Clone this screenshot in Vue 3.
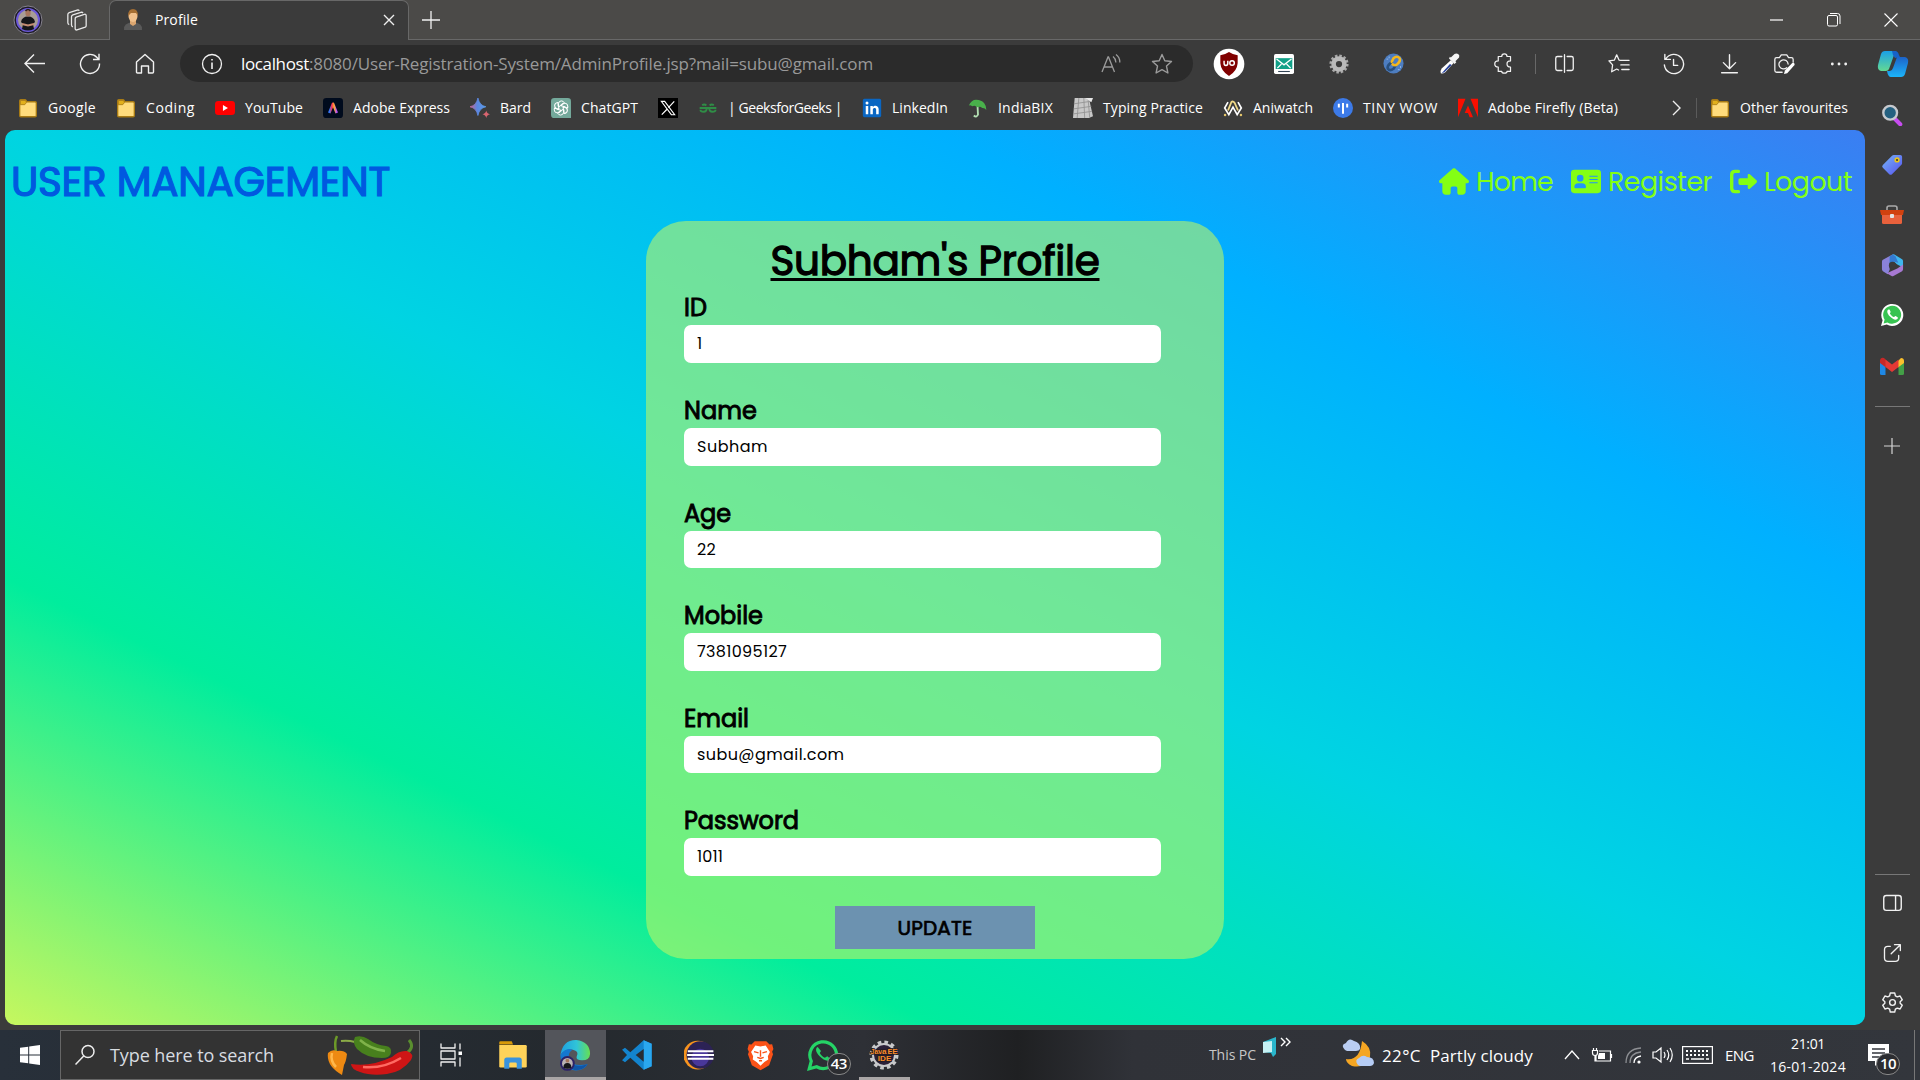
<script setup>
// Spreads a label's letters so that it fills the given width in pixels
const vFit = {
  mounted(el, { value }) {
    if (!value) return
    const natural = el.getBoundingClientRect().width
    const n = [...el.textContent].length
    el.style.letterSpacing = `${(value - natural) / n}px`
  },
}

const folder = '<path d="M2 3.5q0-1.5 1.5-1.5h5q1 0 1.500 1.500l.5 1h10q1.500 0 1.500 1.500v15q0 1.500-1.500 1.500h-17q-1.500 0-1.500-1.500z" fill="#ffdc7c" stroke="#a87b14" stroke-width="1.6"/><path d="M2.800 3h6.500l.8 2.500-2 2.500H2.800z" fill="#e2b01c" stroke="#a87b14"/>'
const whatsapp = '<path d="M1 23l1.600-5.800A11 11 0 1 1 6.800 21.500z" fill="#fff"/><path d="M3.600 20.400l1-3.800A9 9 0 1 1 7.500 19.400z" fill="#37c351"/><path d="M8.500 6.500c-2 1-1.500 4 1.500 7s6.500 4.500 7.800 1.800c.4-1-.2-1.300-2.300-2.300-.8-.3-1 1.300-1.800 1-1.700-.6-3-2-3.800-3.500-.3-.6 1-1 .7-1.800-.8-2-1-2.400-2.100-2.200z" fill="#fff"/>'
const gear = '<path d="M9.700 2h4.600l.7 3 2 1.100 2.900-.9 2.300 4-2.200 2v1.600l2.200 2-2.300 4-2.900-.9-2 1.100-.7 3H9.700L9 19l-2-1.100-2.900.9-2.300-4 2.200-2v-1.600l-2.200-2 2.300-4 2.900.9L9 5z" fill="none" stroke="#f1f1f1" stroke-width="1.500" stroke-linejoin="round"/><circle cx="12" cy="12" r="3" fill="none" stroke="#f1f1f1" stroke-width="1.500"/>'
const line = (d, w = 1.4, c = '#f1f1f1') =>
  `<path d="${d}" fill="none" stroke="${c}" stroke-width="${w}" stroke-linecap="round" stroke-linejoin="round"/>`

const bookmarks = [
  { t: 'Google', w: 48, i: folder },
  { t: 'Coding', w: 49, i: folder },
  { t: 'YouTube', w: 58, i: '<rect x="0" y="3.500" width="24" height="17" rx="4" fill="#f00"/><path d="M9.500 8.500v7l6-3.500z" fill="#fff"/>' },
  { t: 'Adobe Express', w: 97, i: '<rect width="24" height="24" rx="4" fill="#000b1d"/><path d="M7.500 18L12 7l4.500 11" fill="none" stroke="url(#rainbow)" stroke-width="3.200" stroke-linejoin="round"/>' },
  { t: 'Bard', w: 31, i: '<path d="M9.500 0q1.800 9 9.500 10.500-7.700 1.500-9.500 10.500Q7.700 12 0 10.500 7.700 9 9.500 0z" fill="url(#bard)" stroke="url(#bard)"/><path d="M19.500 15q.8 4 4.500 4.500-3.700.5-4.500 4.500-.8-4-4.500-4.500 3.700-.5 4.500-4.500z" fill="#d96570"/>' },
  { t: 'ChatGPT', w: 57, i: '<path d="M4 0h16q4 0 4 4v20H4q-4 0-4-4V4q0-4 4-4z" fill="#74a99b"/><g fill="none" stroke="#fff" stroke-width="1.200" transform="translate(12 12)"><path id="petal" d="M0-3.200L-3-1.500V-5.500Q-2.500-8.500.5-8.500q2.500.2 3.500 2L.5-4.300V0"/><use href="#petal" transform="rotate(60)"/><use href="#petal" transform="rotate(120)"/><use href="#petal" transform="rotate(180)"/><use href="#petal" transform="rotate(240)"/><use href="#petal" transform="rotate(300)"/></g><circle cx="12" cy="12" r="2" fill="#74a99b"/>' },
  { t: '', w: 0, i: '<rect width="24" height="24" fill="#000"/><path d="M4 4h4l12 16h-4z" fill="#000" stroke="#fff" stroke-width="1.300"/><path d="M19.500 4l-7 7.500M10.800 13.500L4.500 20" stroke="#fff" stroke-width="1.400"/>' },
  { t: '| GeeksforGeeks |', w: 114, i: '<g fill="none" stroke="#2f8d46" stroke-width="2.300"><path d="M2 12h20M10.500 12q0 4.500-3.800 4.500T3 14M10 9Q8 7 5 8.500M13.500 12q0 4.500 3.800 4.500T21 14M14 9q2-2 5-.5"/></g>' },
  { t: 'LinkedIn', w: 56, i: '<rect x="1" y="1" width="22" height="22" rx="2" fill="#0a66c2"/><path d="M4.500 9.500h3v10h-3zM10 9.500h3v1.500c2-3 7-2 7 2.500v6h-3v-5.500c0-3-4-2.500-4 0v5.500h-3z" fill="#fff"/><circle cx="6" cy="6" r="1.800" fill="#fff"/>' },
  { t: 'IndiaBIX', w: 55, i: '<path d="M1 9Q5 0 13 2.500q9 2 9 12-2-3-5-2.500-3-3-6 0-2-4-6-2-2-2-4-1z" fill="#49b04b"/><path d="M11.500 11l.5 9q-2 4-5 1" fill="none" stroke="#b3e0b3" stroke-width="2.200"/>' },
  { t: 'Typing Practice', w: 100, i: '<path d="M2 0h17l5 22-5 2H0z" fill="#c8c8c8"/><path d="M1 7l20-3M1 13l21-3M1 19l22-3M7 0L5 24M13 0l1 24M18 0l2 23" stroke="#929292"/><path d="M15 0h9l-2 5z" fill="#e8e8e8"/>' },
  { t: 'Aniwatch', w: 60, i: '<path d="M6 15L10 5q2-2 4 1l4 9" fill="none" stroke="#f0d987" stroke-width="2.200"/><path d="M6 5L2 12l5 8 5-9 5 9 5-8-4-7" fill="none" stroke="#fff" stroke-width="2"/><circle cx="2.500" cy="20.500" r="1.500" fill="#e4c66b"/><circle cx="21.500" cy="20.500" r="1.500" fill="#e4c66b"/>' },
  { t: 'TINY WOW', w: 75, i: '<circle cx="12" cy="12" r="12" fill="#3c7ae8"/><path d="M7 7v4.500M17 7v4.500M12 6v13" fill="none" stroke="#fff" stroke-width="2.400"/>' },
  { t: 'Adobe Firefly (Beta)', w: 130, i: '<path d="M0 1h9L0 23zM15 1h9v22zM12 9l6 14h-4l-2-5H8z" fill="#fa0f00"/>' },
]

const tools = [
  { s: 32, i: '<circle cx="12" cy="12" r="11.500" fill="#fff"/><path d="M12 3q3 2 6.500 2.500v6Q18 17.500 12 21 6 17.500 5.500 11.500v-6Q9 5 12 3z" fill="#800000"/><path d="M8.300 9.500v2q0 1.600 1.400 1.600t1.400-1.600v-2" fill="none" stroke="#fff" stroke-width="1.100"/><circle cx="14.300" cy="11.300" r="1.700" fill="none" stroke="#fff" stroke-width="1.100"/>' },
  { s: 20, i: '<rect width="24" height="24" rx="2" fill="#fff"/><rect x="2" y="5" width="20" height="13" fill="#12a188"/><path d="M3 6l9 7 9-7M4 17l5-5M20 17l-5-5" fill="none" stroke="#fff" stroke-width="1.500"/><path d="M5 21h14" stroke="#345" stroke-width="1.300"/>' },
  { s: 20, i: '<circle cx="12" cy="12" r="10" fill="none" stroke="#a8a8a8" stroke-width="3" stroke-dasharray="3 2.240"/><circle cx="12" cy="12" r="6.500" fill="none" stroke="#b9b9b9" stroke-width="5.500"/>' },
  { s: 21, i: '<circle cx="12" cy="12" r="11.500" fill="#4d7dc0"/><g fill="none" stroke-width="3" stroke-linecap="round"><path d="M14 15l-2 3q-4 3-6.500 0-1-3 2.500-6l2-1.500" stroke="#28507f"/><path d="M10 10l2-4q4-3.500 7 0 1.500 3-3 7-2 2-5 0" stroke="#f4b71c"/></g><path d="M4 7h2M7 4v2M17 19h2M20 15v2" stroke="#9bc0ea"/>' },
  { s: 22, i: '<path d="M14 8l3 3-9 10q-3 2-5 1-1-2 1-5z" fill="#fff"/><path d="M13 12l2 1-8 8-3 1z" fill="#27439b"/><path d="M12 6l6 6 2-2-1-1 4-4q1-3-1-4t-4 0l-4 4-1-1z" fill="#f4f4f4"/>' },
  { s: 21, i: line('M8 4h2q0-3 3-3t3 3h4v5q-4 0-4 3.500t4 3.500v5h-4q0 2-3 2t-3-2H6v-5q-4 0-4-3.500T6 9V4z') },
  { s: 21, i: line('M9 4H4Q2 4 2 6v12q0 2 2 2h5M15 4h5q2 0 2 2v12q0 2-2 2h-5M12 2v20', 1.500) },
  { s: 22, i: line('M14 8l-2-.3L9.500 2 7 7.700l-6 .8 4 4.500-1 7.500L9.500 17.500l2 1M14 8h9M14 13h9M15 18h8') },
  { s: 22, i: line('M3 6.500A10.500 10.500 0 1 1 1.500 13M2 1.500V7h6M11.500 7v6.500H16', 1.500) },
  { s: 21, i: line('M12 2v16M5 11l7 7 7-7M3 22.500h18', 1.600) },
  { s: 22, i: line('M10 21H4q-2 0-2-2V7q0-2 2-2h3l2-3h6l2 3h3q2 0 2 2v3') + line('M15 16a5 5 0 1 1 1.500-4') + '<path d="M13 19l8-8q2-1 2.500 1v1l-8 9-3.500 1z" fill="#fff"/>' },
  { s: 20, i: '<g fill="#f1f1f1"><circle cx="4" cy="12" r="1.700"/><circle cx="12" cy="12" r="1.700"/><circle cx="20" cy="12" r="1.700"/></g>' },
]

const sideTop = [
  { s: 22, i: '<path d="M14 15l7 7" stroke="#c74cf0" stroke-width="4.500" stroke-linecap="round"/><circle cx="10" cy="9.500" r="7.500" fill="#246080" stroke="#c6c9ce" stroke-width="2.600"/>' },
  { s: 22, i: '<path d="M12 2q1-1 2-1h7q2 0 2 2v7q0 1-1 2L12 22q-1.500 1.500-3 0l-7-7q-1.500-1.500 0-3z" fill="url(#tag)"/><circle cx="17.500" cy="6.500" r="2" fill="#333" stroke="#e8c31c" stroke-width="1.800"/>' },
  { s: 24, i: '<path d="M7 8V5q0-2 2-2h6q2 0 2 2v3" fill="none" stroke="#aaa" stroke-width="1.600"/><rect x="2" y="9" width="20" height="12" rx="1.500" fill="#e8613c"/><path d="M0 7h24l-1 5H1z" fill="#d1410f"/><rect x="10" y="11" width="4" height="4" rx="1" fill="#e3e3e3"/>' },
  { s: 23, i: '<path d="M12 .5q1-.5 2 0l8 5q1 .5 1 2V14l-6-3-5-4z" fill="#3fb6ee"/><path d="M12 .5L2 6Q1 6.700 1 8v8q0 1 1 2l5 3 2-4.500V9l6-4z" fill="#8a82d9"/><path d="M12 .5L9 2.500V12l5-4 4 1-3-7z" fill="#347bd1"/><path d="M6 20l11-5 6-4v5q0 1-1 2l-9 5q-1 .5-2 0z" fill="#a779d2"/><circle cx="12" cy="12" r="3.800" fill="#3b3b3b"/>' },
  { s: 24, i: whatsapp },
  { s: 24, i: '<path d="M0 7h5.500v14H1.500Q0 21 0 19.500z" fill="#1e88e5"/><path d="M18.500 7H24v12.500q0 1.500-1.500 1.500h-4z" fill="#43a047"/><path d="M18 7l3-3q3 0 3 3v2l-6 4.500z" fill="#fbc02d"/><path d="M0 9V6q1-3 4-2l2 2v7.500z" fill="#c62828"/><path d="M5.500 5.500L12 10.500l6.500-5v7.500L12 18l-6.500-5z" fill="#e53935"/>' },
]
const sideBottom = [
  { s: 21, i: '<rect x="2" y="4" width="20" height="17" rx="3" fill="none" stroke="#f1f1f1" stroke-width="1.600"/><path d="M15.500 4v17" stroke="#f1f1f1" stroke-width="1.600"/>' },
  { s: 20, i: line('M10 4H7Q3 4 3 8v10q0 4 4 4h9q4 0 4-4v-3M11 13L22 2M15 2h7v7', 1.600) },
  { s: 23, i: gear },
]

const fields = [
  { label: 'ID', lw: 23, value: '1', vw: 6 },
  { label: 'Name', lw: 73, value: 'Subham', vw: 71 },
  { label: 'Age', lw: 47, value: '22', vw: 19 },
  { label: 'Mobile', lw: 79, value: '7381095127', vw: 90 },
  { label: 'Email', lw: 65, value: 'subu@gmail.com', vw: 147.5 },
  { label: 'Password', lw: 115, value: '1011', vw: 26 },
]

const apps = [
  { s: 24, i: line('M3 1v4h14V1M3 23v-4h14v4M3 8h14v8H3zM22 1v5M22 15v8', 1.300) + '<rect x="20.500" y="8.500" width="3.500" height="3.500" fill="#fff"/>' },
  { s: 30, i: '<path d="M1 2q0-1 1-1h9l1 2.500H1z" fill="#d99a08"/><path d="M1 4h21q1 0 1 1v16q0 1-1 1H2q-1 0-1-1z" fill="#ffd35a"/><path d="M5 23v-7q0-2 2-2h10q2 0 2 2v7h-4v-4q0-1-1-1h-4q-1 0-1 1v4z" fill="#3a93dd"/>' },
  { s: 32, active: true, i: '<path d="M1 12Q3 .5 13 .8 23 2 23.300 11q-.3 5-6 5-5 0-4-3 2-4-3-5-6-.5-9.300 4z" fill="url(#edge)"/><path d="M1 12q4-6 9-4-4 3-2.500 8 3 5 14 3-3 5-10 4.500Q1.500 22.500 1 12z" fill="#1477d0"/><path d="M8 13q-1 8 9 7l4.500-1q-4 5-10 4.300Q4 21 8 13z" fill="#1055a5"/><circle cx="6.300" cy="18.300" r="4.800" fill="#b9b2b4" stroke="#2c2268" stroke-width="1.500"/><circle cx="6.300" cy="16.300" r="1.400" fill="#a5745c"/><path d="M3.300 21.500q0-3.500 3-3.500t3 3.500q-3 1.500-6 0z" fill="#16161a"/>' },
  { s: 32, i: '<path d="M17 1l6 2.500v17L17 23 7 14l-4 3.500L.8 16 4.500 12 .8 8 3 6.500 7 10z" fill="#1384ce"/><path d="M17 1l6 2.500v17L17 23V7z" fill="#2aa7ef"/><path d="M17 7.500V17L11 12z" fill="#282c33"/>' },
  { s: 30, i: '<circle cx="11" cy="12" r="11.500" fill="#f7941e"/><circle cx="13" cy="12" r="11" fill="#2c2255"/><circle cx="13" cy="14" r="7" fill="#49379a"/><path d="M3 9h20.500M2.500 12h21.500M3 15h20.500" stroke="#fff" stroke-width="1.600"/>' },
  { s: 31, i: '<path d="M7.500 1h9l2.500 2.500 2-.3L22 7l-1 2 .7 2-3 8.500L12 23.500l-6.700-4L2.300 11 3 9 2 7l1-3.800 2 .3z" fill="#fb5218"/><path d="M12 5l4-.8 3.300 5-1.600 3.300.3 2.500-3 2L12 20l-3-3-3-2 .3-2.500L4.700 9.200 8 4.200z" fill="#fff"/><path d="M12 8v5M7 9l3.500 1M17 9l-3.500 1M9.500 13.500l2.500.8 2.500-.8M10.800 16h2.400" stroke="#fb5218" stroke-width="1.100" fill="none"/>' },
  { s: 32, badge: 43, i: '<path d="M1.700 22.300l1.500-5.700A10 10 0 1 1 7.200 20.800z" fill="none" stroke="#25d366" stroke-width="2.400"/><path d="M8 6c-2 1-1.500 4 1.500 7s6.500 4.500 8.200 2l-2.500-2-1.800 1c-1.700-.6-3-2-3.800-3.500l.9-1.500z" fill="#25d366"/>' },
  { s: 30, open: true, i: '<circle cx="12" cy="12" r="8.800" fill="#2a2038" stroke="#c8c9cb" stroke-width="1.600"/><circle cx="12" cy="12" r="10.300" fill="none" stroke="#c8c9cb" stroke-width="2.600" stroke-dasharray="2.900 2.493"/><g text-anchor="middle" font-size="6.500" font-family="Liberation Sans, sans-serif" font-weight="bold" fill="#f98c2c" stroke="#241a20" stroke-width="1.200" paint-order="stroke"><text x="12" y="11.500" textLength="22">Java EE</text><text x="12.500" y="17">IDE</text></g>' },
]
</script>

<template>
  <div class="screen">
    <svg class="defs" width="0" height="0">
      <defs>
        <linearGradient id="rainbow"><stop offset="0" stop-color="#2f7bff" /><stop offset=".35" stop-color="#ff2d55" /><stop offset=".65" stop-color="#ffb02e" /><stop offset="1" stop-color="#b44dff" /></linearGradient>
        <linearGradient id="bard"><stop offset="0" stop-color="#c9658f" /><stop offset=".45" stop-color="#5b86e0" /><stop offset="1" stop-color="#5b9de8" /></linearGradient>
        <linearGradient id="tag" x2="1" y2="1"><stop offset="0" stop-color="#76b7f5" /><stop offset="1" stop-color="#5650f0" /></linearGradient>
        <linearGradient id="edge"><stop offset="0" stop-color="#1d9fe0" /><stop offset=".55" stop-color="#30c4d8" /><stop offset="1" stop-color="#66e052" /></linearGradient>
        <linearGradient id="cpa" x2="0" y2="1"><stop offset="0" stop-color="#1aa0e8" /><stop offset="1" stop-color="#63d993" /></linearGradient>
        <linearGradient id="cpb" x2="0" y2="1"><stop offset="0" stop-color="#1c62c8" /><stop offset="1" stop-color="#1cb5fa" /></linearGradient>
      </defs>
    </svg>

    <div class="titlebar">
      <svg class="avatar" width="30" height="30" viewBox="0 0 30 30"><circle cx="15" cy="15" r="14" fill="#1d1a26" stroke="#85828c" /><circle cx="15" cy="15" r="11" fill="#a89d96" stroke="#6b58d8" stroke-width="2" /><path d="M8 17q1-5.500 7-5.500t7 5.500l-2 2 1 5q-6 3-12 0l1-5z" fill="#16161a" /><ellipse cx="15" cy="8" rx="2.600" ry="3.400" fill="#a5745c" /><path d="M12.500 6q2.500-3 5 0" stroke="#2a1d18" stroke-width="1.500" fill="none" /><path d="M9 19l6 1.500 6-1.500" stroke="#c58d73" stroke-width="2" fill="none" /></svg>
      <svg class="spaces" width="22" height="22" viewBox="0 0 24 24" fill="none" stroke="#e8e8e8" stroke-width="1.400" stroke-linejoin="round"><path d="M10 10.500q0-1.200 1-1.700l9-3q2-.5 2 1.500v11q0 1-1 1.500l-9 3q-2 .5-2-1.500z" /><path d="M7.500 19.500Q6 19 6 17.500V8.500Q6 7 7.500 6.500l9.500-3q1 0 1.500 1" /><path d="M3.500 17Q2 16.500 2 15V6Q2 4.500 3.500 4L13 1q1 0 1.500 1" /></svg>
      <div class="tab">
        <svg width="20" height="22" viewBox="0 0 20 22"><path d="M1 21q-1-7 9-8 10 1 9 8z" fill="#595959" /><path d="M7 10h6v5l-3 2-3-2z" fill="#dba670" /><ellipse cx="10" cy="7" rx="4.500" ry="6" fill="#f0c08b" /><path d="M5 7q0-7 5-7t5 7l-2-3H8z" fill="#a66f33" /></svg>
        <span v-fit="43" class="tab-title">Profile</span>
        <svg class="tab-close" width="12" height="12" viewBox="0 0 12 12"><path d="M1 1l10 10M11 1L1 11" stroke="#eee" stroke-width="1.400" /></svg>
      </div>
      <svg class="newtab" width="18" height="18" viewBox="0 0 18 18"><path d="M9 0v18M0 9h18" stroke="#f1f1f1" stroke-width="1.300" /></svg>
      <div class="winbtns">
        <svg width="14" height="14" viewBox="0 0 14 14"><path d="M0 7h13" stroke="#fff" stroke-width="1.200" /></svg>
        <svg width="14" height="14" viewBox="0 0 14 14" fill="none" stroke="#fff"><rect x=".5" y="2.500" width="10" height="10.500" rx="1.500" /><path d="M3 .5h7.500q2.500 0 2.500 2.500v8" /></svg>
        <svg width="14" height="14" viewBox="0 0 14 14"><path d="M.5.5l13 13M13.500.5l-13 13" stroke="#fff" stroke-width="1.100" /></svg>
      </div>
    </div>

    <div class="toolbar">
      <div class="navbtns">
        <svg width="22" height="22" viewBox="0 0 22 22" fill="none" stroke="#f1f1f1" stroke-width="1.400"><path d="M21 10.500H1.500M10 1.500l-9 9 9 9" /></svg>
        <svg width="22" height="22" viewBox="0 0 22 22" fill="none" stroke="#f1f1f1" stroke-width="1.400"><path d="M20.500 10.500A9.500 9.500 0 1 1 18 4.500l1.500 1.700M20 .8v5.700h-6" /></svg>
        <svg width="22" height="22" viewBox="0 0 22 22" fill="none" stroke="#f1f1f1" stroke-width="1.400" stroke-linejoin="round"><path d="M2.500 9L11 1.500 19.500 9v10q0 1-1 1h-4v-7h-7v7h-4q-1 0-1-1z" /></svg>
      </div>
      <div class="address">
        <svg width="22" height="22" viewBox="0 0 22 22" fill="none" stroke="#f1f1f1" stroke-width="1.300"><circle cx="11" cy="11" r="9.500" /><path d="M11 9.500v6.500M11 6v1.600" stroke-width="1.600" /></svg>
        <div class="url"><span v-fit="68" class="host">localhost</span><span v-fit="564">:8080/User-Registration-System/AdminProfile.jsp?mail=subu@gmail.com</span></div>
        <svg class="aloud" width="20" height="20" viewBox="0 0 20 20" fill="none" stroke="#9b9b9b" stroke-width="1.300"><path d="M1 18L7 3h.5l6 15M3.500 13h8M12 2.500q3 2.500 2.800 6M15 .5q4 3 3.800 8" /></svg>
        <svg class="star" width="22" height="22" viewBox="0 0 22 22" fill="none" stroke="#9b9b9b" stroke-width="1.400" stroke-linejoin="round"><path d="M11 1.500l2.800 6.200 6.700.8-5 4.600 1.400 6.900L11 16.600 5.100 20l1.400-6.900-5-4.600 6.700-.8z" /></svg>
      </div>
      <div class="tools">
        <div v-for="(t, n) in tools" :key="n" class="tool" :class="{ divided: n === 6 }">
          <svg :width="t.s" :height="t.s" viewBox="0 0 24 24" v-html="t.i"></svg>
        </div>
        <svg class="copilot" width="32" height="30" viewBox="0 0 32 28"><path d="M8 1h9q3 0 4 4h-4l-5 14q-1 2-3 2H4q-4-1-3-6L4 4q1-3 4-3z" fill="url(#cpa)" /><path d="M15 1h3q3 0 4 4l1 2-5 1-2-3z" fill="#1762c8" /><path d="M20 7h8q4 1 3 6l-3 11q-1 3-4 3H14q-3 0-4-6h3q2 0 3-3z" fill="url(#cpb)" /></svg>
      </div>
    </div>

    <div class="bookmarks">
      <div v-for="b in bookmarks" :key="b.t" class="bookmark">
        <svg width="20" height="20" viewBox="0 0 24 24" v-html="b.i"></svg>
        <span v-if="b.t" v-fit="b.w">{{ b.t }}</span>
      </div>
      <svg class="more" width="10" height="16" viewBox="0 0 10 16"><path d="M1 1l7 7-7 7" fill="none" stroke="#eee" stroke-width="1.400" /></svg>
      <div class="bookmark other">
        <svg width="20" height="20" viewBox="0 0 24 24" v-html="folder"></svg>
        <span v-fit="108">Other favourites</span>
      </div>
    </div>

    <div class="body">
      <main class="page">
        <header class="header">
          <h1 v-fit="379">USER MANAGEMENT</h1>
          <nav>
            <a><svg width="30" height="27" viewBox="0 0 576 512" fill="currentColor"><path d="M575.800 255.500c0 18-15 32.100-32 32.100h-32l.7 160.200c.2 35.500-28.500 64.300-64 64.300H392c-22 0-40-18-40-40v-88c0-17.700-14.300-32-32-32h-64c-17.700 0-32 14.300-32 32v88c0 22-18 40-40 40H128.100c-35.300 0-64-28.700-64-64V287.600H32c-18 0-32-14-32-32.100 0-9 3-17 10-24L266.400 8c7-7 15-8 22-8s15 2 21 7l255.400 224.500c8 7 12 15 11 24z" /></svg><span v-fit="77">Home</span></a>
            <a><svg width="30" height="27" viewBox="0 0 576 512" fill="currentColor" fill-rule="evenodd"><path d="M64 32h448q64 0 64 64v320q0 64-64 64H64q-64 0-64-64V96q0-64 64-64zM176 256a64 64 0 1 0 0-128 64 64 0 0 0 0 128zM80 384h192q16 0 16-16 0-80-80-80h-64q-80 0-80 80 0 16 16 16zM352 145h160v18H352zM352 208h160v18H352zM352 271h160v18H352z" /></svg><span v-fit="104">Register</span></a>
            <a><svg width="27" height="27" viewBox="0 0 512 512" fill="currentColor"><path d="M160 96H96q-32 0-32 32v256q0 32 32 32h64q32 0 32 32t-32 32H96q-96 0-96-96V128q0-96 96-96h64q32 0 32 32t-32 32zM502 233L377 119q-41-20-41 19v54H192q-32 0-32 32v64q0 32 32 32h144v54q3 39 41 19l125-114q18-23 0-46z" /></svg><span v-fit="88">Logout</span></a>
          </nav>
        </header>
        <form class="card" @submit.prevent>
          <h2><span v-fit="329">Subham's Profile</span></h2>
          <div v-for="f in fields" :key="f.label" class="field">
            <label><span v-fit="f.lw">{{ f.label }}</span></label>
            <div class="input"><span v-fit="f.vw">{{ f.value }}</span></div>
          </div>
          <button type="submit"><span v-fit="75">UPDATE</span></button>
        </form>
      </main>
      <aside class="side">
        <div v-for="(s, n) in sideTop" :key="n" class="side-item">
          <svg :width="s.s" :height="s.s" viewBox="0 0 24 24" v-html="s.i"></svg>
        </div>
        <hr class="rule first" />
        <svg class="add" width="16" height="16" viewBox="0 0 16 16"><path d="M8 0v16M0 8h16" stroke="#d5d5d5" stroke-width="1.200" /></svg>
        <hr class="rule second" />
        <div v-for="(s, n) in sideBottom" :key="n" class="side-item">
          <svg :width="s.s" :height="s.s" viewBox="0 0 24 24" v-html="s.i"></svg>
        </div>
      </aside>
    </div>

    <footer class="taskbar">
      <div class="start"><svg width="20" height="20" viewBox="0 0 20 20" fill="#fff"><path d="M0 2.800l8.200-1.100v7.800H0zM9.200 1.500L20 0v9.500H9.200zM0 10.500h8.200v7.800L0 17.200zM9.200 10.500H20V20L9.200 18.500z" /></svg></div>
      <div class="search">
        <svg width="22" height="22" viewBox="0 0 22 22" fill="none" stroke="#eee" stroke-width="1.500"><circle cx="14" cy="7.500" r="6" /><path d="M9.700 12L1.500 20.500" /></svg>
        <span v-fit="164">Type here to search</span>
        <svg class="peppers" width="88" height="42" viewBox="0 0 88 42"><path d="M9 18Q7 8 10 2" fill="none" stroke="#6d9a28" stroke-width="2.500" /><path d="M1 19q4-4 9-2 7-1 10 3-1 8-3 11l-2 10Q-1 32 1 19z" fill="#ee8a12" /><path d="M5 19q-2 8 4 14" stroke="#ffb84b" stroke-width="2.500" fill="none" /><path d="M14 7q7-1 14 1" fill="none" stroke="#8bab47" stroke-width="2" /><path d="M28 3q7-2 13 2 8 6 18 7 6 1 5 7-1 5-9 5-16 0-25-9-5-6-2-12z" fill="#48801d" /><path d="M33 6q10 9 25 11" fill="none" stroke="#80b34a" stroke-width="2.500" /><path d="M80 19q8-6 2-13" fill="none" stroke="#5a8e2f" stroke-width="3" /><path d="M24 30q20 3 41-7 7-7 15-6 8 3 4 9-9 12-24 14-16 2-27-2-9-3-9-8z" fill="#cf1515" /><path d="M36 33q20 2 38-9" fill="none" stroke="#ff6b62" stroke-width="2.500" /></svg>
      </div>
      <div class="apps">
        <div v-for="(a, n) in apps" :key="n" class="app" :class="{ active: a.active, open: a.open }">
          <svg :width="a.s" :height="a.s" viewBox="0 0 24 24" v-html="a.i"></svg>
          <b v-if="a.badge" class="badge">{{ a.badge }}</b>
        </div>
      </div>
      <div class="tray">
        <span v-fit="47" class="pc">This PC</span>
        <svg class="device" width="13" height="20" viewBox="0 0 13 20"><path d="M0 5l13-5v17l-3 3-2-4-8-1z" fill="#2ab6cc" /><path d="M0 5l9-1v11l-9 1z" fill="#c6f1f4" /></svg>
        <svg class="chevrons" width="11" height="10" viewBox="0 0 11 10"><path d="M1 1l4 4-4 4M6 1l4 4-4 4" fill="none" stroke="#fff" stroke-width="1.400" /></svg>
        <svg class="weather" width="32" height="30" viewBox="0 0 32 30"><path d="M20 2q10 6 8 16-5 12-18 9-6-3-6-7 14 2 16-18z" fill="#f5a623" /><path d="M3 11q-5-5 1-7 3-6 8-2 7 2 6 8-1 2-4 2H5z" fill="#b9cdf2" /><path d="M16 26q-4-5 1-7 4-4 8-1 7 0 7 6-1 3-4 3H18z" fill="#b5ccf5" /></svg>
        <span v-fit="39" class="temp">22°C</span>
        <span v-fit="103" class="cond">Partly cloudy</span>
        <svg class="up" width="16" height="10" viewBox="0 0 16 10"><path d="M1 9l7-8 7 8" fill="none" stroke="#fff" stroke-width="1.300" /></svg>
        <svg class="batt" width="22" height="16" viewBox="0 0 22 16" fill="none" stroke="#fff" stroke-width="1.200"><path d="M8 4h11.500v10H5V9M20.500 7v4M1.500 3.500h5V6q0 2.500-2.500 2.500T1.500 6zM2.500 1v2.500M5.500 1v2.500M4 8.500V14h1" /><path d="M8 6h6v6H7V9z" fill="#fff" stroke="none" /></svg>
        <svg class="wifi" width="17" height="17" viewBox="0 0 17 17" fill="none" stroke="#8d8f93" stroke-width="1.300"><path d="M1 16Q1 2 16 1M5 16Q5 6 16 5" /><path d="M9 16q0-6 7-7" stroke="#fff" /><circle cx="14" cy="15" r="1.600" fill="#fff" stroke="none" /></svg>
        <svg class="vol" width="21" height="18" viewBox="0 0 21 18" fill="none" stroke="#fff" stroke-width="1.200"><path d="M1 6h3l5-4v14l-5-4H1zM12 6q2 3 0 6M15 4q3.500 5 0 10M18 2q4.500 7 0 14" /></svg>
        <svg class="kbd" width="31" height="18" viewBox="0 0 31 18" fill="none" stroke="#fff" stroke-width="1.200"><rect x=".6" y=".6" width="29.800" height="16.800" /><path d="M4 5h23M4 9h23" stroke-dasharray="2 2" stroke-width="1.800" /><path d="M4 13h3M9 13h13M24 13h3" stroke-width="1.500" /></svg>
        <span v-fit="29" class="lang">ENG</span>
        <div class="clock"><span v-fit="34">21:01</span><span v-fit="76">16-01-2024</span></div>
        <div class="notes">
          <svg width="21" height="22" viewBox="0 0 21 22"><path d="M0 0h21v17h-9l-5 5v-5H0z" fill="#fff" /><path d="M4 5h13M4 9h13M4 13h7" stroke="#33363c" stroke-width="1.300" /></svg>
          <b class="badge">10</b>
        </div>
        <i class="peek"></i>
      </div>
    </footer>
  </div>
</template>

<style>
html, body { margin: 0; background: #3b3b3b; overflow: hidden; }
</style>

<style scoped>
.screen { width: 1920px; height: 1080px; display: flex; flex-direction: column; background: #3b3b3b; color: #fff; font-family: "Open Sans", "Noto Sans", sans-serif; overflow: hidden; position: relative; }
.screen * { box-sizing: border-box; }
.defs { position: absolute; }
svg { display: block; flex: none; }
span { white-space: nowrap; flex: none; display: inline-block; }

.titlebar { height: 40px; flex: none; display: flex; align-items: center; background: #4b4a48; box-shadow: inset 0 -1px #686868; padding-bottom: 1px; }
.avatar { margin-left: 13px; }
.spaces { margin-left: 23px; }
.tab { width: 300px; height: 40px; margin-left: 21px; margin-bottom: -1px; padding: 0 13px 1px 13px; display: flex; align-items: center; background: #3b3b3b; border: 1px solid #686868; border-bottom: 0; border-radius: 7px 7px 0 0; }
.tab-title { margin-left: 12px; font-size: 14px; line-height: 18px; }
.tab-close { margin-left: auto; }
.newtab { margin-left: 13px; }
.winbtns { margin-left: auto; margin-right: 22px; display: flex; gap: 43px; }

.toolbar { height: 47px; flex: none; display: flex; align-items: center; }
.navbtns { display: flex; gap: 33px; margin-left: 24px; }
.address { width: 1013px; height: 37px; margin-left: 24px; padding: 0 20px 0 21px; border-radius: 19px; background: #2b2b2b; display: flex; align-items: center; }
.url { flex: 1; margin-left: 18px; font-size: 17px; line-height: 24px; margin-top: 1px; color: #999; display: flex; }
.host { color: #fff; }
.star { margin-left: 30px; }
.tools { display: flex; align-items: center; margin-left: 8px; height: 40px; }
.tool { width: 55px; height: 20px; display: flex; align-items: center; justify-content: center; }
.divided { width: 57px; margin-left: 3.500px; padding-left: 2px; box-shadow: inset 1px 0 #686868; }
.copilot { margin-left: 10px; }

.bookmarks { height: 43px; flex: none; display: flex; align-items: center; padding-left: 18px; gap: 20px; font-size: 14px; padding-bottom: 2px; }
.bookmark { display: flex; align-items: center; gap: 10px; }
.bookmark span { line-height: 19px; }
.more { margin-left: auto; margin-right: -6px; }
.other { margin-right: 72px; border-left: 1px solid #5b5b5b; padding-left: 13px; }

.body { height: 900px; flex: none; display: flex; padding-left: 5px; }
.page { width: 1860px; height: 895px; border-radius: 10px; background: linear-gradient(to right top, #c6f75e, #00ed9d, #00d4e2, #00b0ff, #3b7ef2); overflow: hidden; font-family: Poppins, Inter, sans-serif; }
.header { height: 91px; display: flex; align-items: center; justify-content: space-between; padding: 11px 13px 0 6px; }
h1 { margin: 0; font-size: 40.500px; line-height: 50px; font-weight: 400; -webkit-text-stroke: 1.200px currentColor; color: #0059e0; white-space: nowrap; padding-top: 1px; }
nav { display: flex; gap: 18px; color: #84ff14; font-size: 26.800px; line-height: 34px; }
nav a { display: flex; align-items: center; gap: 7px; }
nav span { margin-top: 1px; }
.card { width: 578px; height: 738px; margin: 0 0 0 641px; border-radius: 40px; background: rgba(187, 245, 102, .6); color: #000; display: flex; flex-direction: column; padding: 13px 38px 10px; }
h2 { margin: 0; height: 58.600px; text-align: center; font-size: 40.500px; line-height: 54px; font-weight: 400; -webkit-text-stroke: 1.300px #000; }
h2 span { text-decoration: underline; text-decoration-thickness: 3px; text-underline-offset: 3px; }
.field { height: 102.600px; flex: none; }
label { display: block; height: 35px; font-size: 24px; line-height: 36px; font-weight: 400; -webkit-text-stroke: .9px #000; }
.input { width: 477px; height: 37.600px; border-radius: 7px; background: #fff; padding-left: 13px; font-size: 16px; line-height: 38px; }
button { width: 200px; height: 43px; margin: auto auto 0; border: 0; padding: 0; background: #6c92b0; color: #000; font: 400 20px/45px Poppins, Inter, sans-serif; -webkit-text-stroke: .7px #000; }

.side { width: 55px; height: 900px; display: flex; flex-direction: column; align-items: center; padding-right: 1px; }
.side-item { height: 50.100px; flex: none; display: flex; align-items: center; justify-content: center; }
.side-item:first-child { margin-top: -40px; }
.rule { width: 35px; height: 1px; border: 0; background: #777; margin: 0; flex: none; }
.first { margin-top: 15px; }
.add { margin-top: 31px; }
.second { margin-top: auto; margin-bottom: 3px; }
.side-item:last-child { margin-bottom: 2px; }

.taskbar { height: 50px; flex: none; display: flex; background: linear-gradient(90deg, #28303a 0, #24292e 30%, #2e3036 45%, #1f2022 53%, #303238 59%, #33363c 100%); }
.start { width: 60px; display: flex; align-items: center; justify-content: center; }
.search { width: 360px; border: 1px solid #666; background: #333; display: flex; align-items: center; padding-left: 13px; font-size: 18px; color: #d8dce0; }
.search span { margin-left: 14px; }
.peppers { margin-left: 53px; }
.apps { display: flex; padding-left: 1px; }
.app { width: 61.800px; height: 50px; display: flex; align-items: center; justify-content: center; position: relative; }
.app:first-child { padding-right: 4px; }
.app:nth-child(2) { padding-right: 1px; }
.active { background: #53555b; box-shadow: inset 0 -3px #aaa6a6; }
.open::after { content: ""; position: absolute; bottom: 0; left: 5px; width: 51px; height: 3px; background: #aaa6a6; }
.badge { position: absolute; left: 35px; top: 23px; width: 24px; height: 22px; border-radius: 12px; background: #2c2d31; border: 1px solid #888; font-size: 15px; line-height: 19px; text-align: center; font-weight: 600; letter-spacing: -.5px; }
.tray { flex: 1; display: flex; align-items: center; font-size: 17px; }
.pc { margin-left: 293.600px; font-size: 14px; color: #c8c8c8; line-height: 20px; margin-top: -1px; }
.device { margin-left: 7px; margin-bottom: 16px; }
.chevrons { margin-left: 4px; margin-bottom: 26px; }
.weather { margin-left: 51px; margin-bottom: 2px; }
.temp { margin-left: 8px; }
.cond { margin-left: 9px; }
.up { margin-left: 31px; }
.batt { margin-left: 11px; }
.wifi { margin-left: 12px; }
.vol { margin-left: 10px; }
.kbd { margin-left: 9px; }
.lang { margin-left: 12px; font-size: 15px; }
.clock { margin-left: 16px; display: flex; flex-direction: column; align-items: center; gap: 3px; font-size: 14px; line-height: 20px; }
.notes { margin-left: 22px; position: relative; }
.notes .badge { left: 8px; top: 9px; }
.peek { margin-left: auto; margin-right: 5px; width: 1px; height: 50px; background: #777; }
</style>
